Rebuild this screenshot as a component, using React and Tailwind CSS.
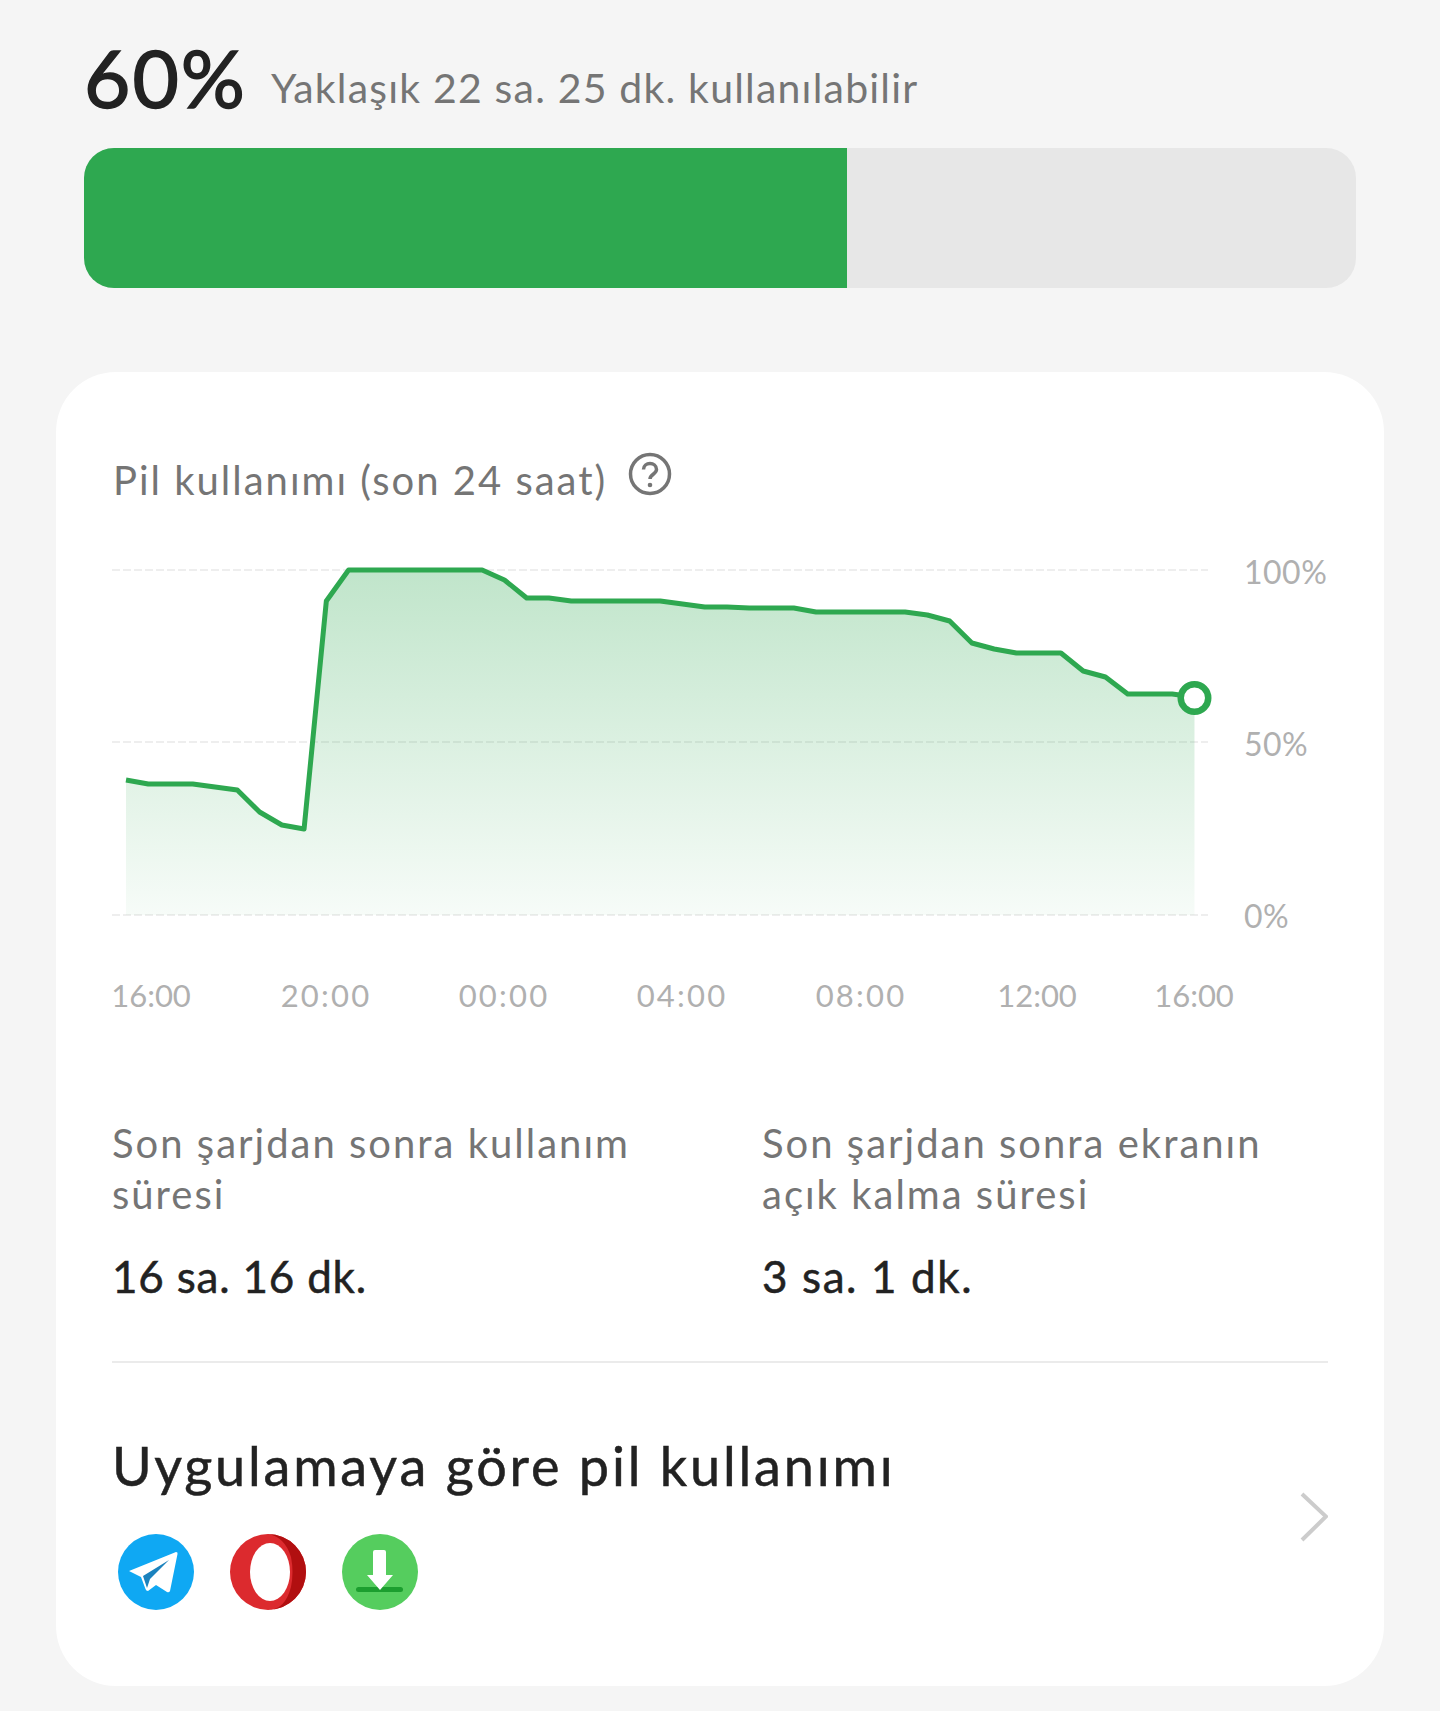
import React from "react";

// y pixel of each half hour sample, x runs 126..1194 across the chart
const samples = [
  780, 784, 784, 784, 787, 790, 812, 825, 829, 601, 570, 570, 570, 570, 570, 570, 570, 580, 598, 598, 601, 601, 601,
  601, 601, 604, 607, 607, 608, 608, 608, 612, 612, 612, 612, 612, 615, 621, 643, 649, 653, 653, 653, 671, 677, 694,
  694, 694, 697,
];

const CHART_LEFT = 112;
const CHART_TOP = 550;

const linePoints = samples.map((y, i) => [126 + i * 22.26 - CHART_LEFT, y - CHART_TOP]);
const linePath = linePoints.map((p) => p.join(",")).join(" ");
const areaPath = `${linePath} ${linePoints[48][0]},365 ${linePoints[0][0]},365`;

function Chart() {
  return (
    <svg width="1100" height="375" viewBox="0 0 1100 375" className="block shrink-0">
      <defs>
        <linearGradient id="area" x1="0" y1="0" x2="0" y2="1">
          <stop offset="0" stopColor="#2ea850" stopOpacity="0.3" />
          <stop offset="1" stopColor="#2ea850" stopOpacity="0.04" />
        </linearGradient>
      </defs>
      {[20, 192, 365].map((y) => (
        <line key={y} x1="0" x2="1096" y1={y} y2={y} stroke="#eeeeee" strokeWidth="2" strokeDasharray="8 3" />
      ))}
      <polygon points={areaPath} fill="url(#area)" />
      <polyline points={linePath} fill="none" stroke="#2ea850" strokeWidth="5" strokeLinejoin="round" />
      <circle cx={linePoints[48][0]} cy={148} r="13.75" fill="#ffffff" stroke="#2ea850" strokeWidth="6.500" />
    </svg>
  );
}

function TelegramIcon() {
  return (
    <svg width="76" height="76" viewBox="0 0 76 76">
      <circle cx="38" cy="38" r="38" fill="#0fa8f3" />
      <path d="M11 37 L58 18 Q60 18 59.500 20 L52 57 Q51 59 49 58 L38 51 L30 57 Q28 57 27.500 55 L23 43 Z" fill="#ffffff" />
      <path d="M25 42 L51 26 L32 45 L29 54 Z" fill="#1b82bd" />
    </svg>
  );
}

function OperaIcon() {
  return (
    <svg width="76" height="76" viewBox="0 0 76 76">
      <circle cx="38" cy="38" r="38" fill="#dc2a2e" />
      <path d="M38 0 A38 38 0 0 1 38 76 Q55 76 61 53 Q64 38 61 23 Q55 3 38 0 Z" fill="#b10f10" />
      <ellipse cx="40" cy="38" rx="20" ry="29" fill="#ffffff" />
    </svg>
  );
}

function DownloadIcon() {
  return (
    <svg width="76" height="76" viewBox="0 0 76 76">
      <circle cx="38" cy="38" r="38" fill="#55cd5e" />
      <rect x="14" y="53" width="47" height="5" rx="2.500" fill="#1c9e2f" />
      <path d="M31 18 Q31 16 33 16 H42 Q44 16 44 18 V41 H51 L38 56 L25 41 H31 Z" fill="#ffffff" />
    </svg>
  );
}

function Stat({ label, value, className, valueClassName }) {
  return (
    <div className={className}>
      <p className="max-w-[560px] text-[40px] leading-[51px] tracking-[2px] text-[#757575]">{label}</p>
      <p className={`mt-[30px] text-[44px] leading-[52px] text-[#222222] [-webkit-text-stroke:0.5px_#222222] ${valueClassName}`}>
        {value}
      </p>
    </div>
  );
}

export default function App() {
  return (
    <div className="w-[1440px] h-[1711px] overflow-hidden bg-[#f5f5f5] font-['Lato',sans-serif]">
      {/* Charge summary */}
      <div className="px-[84px] pt-[32px]">
        <div className="flex items-end h-[90px]">
          <span className="text-[80px] leading-[90px] tracking-[2px] text-[#222222] [-webkit-text-stroke:1.5px_#222222]">60%</span>
          <span className="ml-[24px] text-[41px] leading-[68px] tracking-[1.2px] text-[#757575]">
            Yaklaşık 22 sa. 25 dk. kullanılabilir
          </span>
        </div>
        <div className="mt-[26px] h-[140px] rounded-[30px] overflow-hidden bg-[#e7e7e7]">
          <div className="h-full w-[763px] bg-[#2ea850]" />
        </div>
      </div>

      {/* Usage card */}
      <div className="mt-[84px] mx-[56px] h-[1314px] rounded-[60px] bg-white px-[56px] pt-[78px]">
        <div className="flex items-center">
          <h2 className="ml-px text-[40px] leading-[60px] tracking-[2px] text-[#757575]">Pil kullanımı (son 24 saat)</h2>
          <svg width="44" height="44" viewBox="0 0 44 44" className="ml-[21px] -mt-[12px]">
            <circle cx="22" cy="22" r="19.500" fill="none" stroke="#757575" strokeWidth="3.500" />
            <path
              d="M15.500 17.500 C15.500 9.500 28.500 9.500 28.500 17.500 C28.500 22 22 22.500 22 27"
              fill="none"
              stroke="#757575"
              strokeWidth="3.500"
            />
            <circle cx="22" cy="33" r="2.300" fill="#757575" />
          </svg>
        </div>

        <div className="mt-[40px] flex">
          <Chart />
          <div className="ml-[32px] flex h-[384px] flex-col justify-between pt-[4px] text-[32px] leading-[36px] tracking-[0.5px] text-[#b0b0b0]">
            <span>100%</span>
            <span>50%</span>
            <span>0%</span>
          </div>
        </div>

        {/* Time axis */}
        <div className="mt-[41px] flex text-[31px] leading-[40px] text-[#b0b0b0]">
          <span className="flex w-0 ml-[39px] justify-center">16:00</span>
          <span className="flex w-0 ml-[175px] justify-center tracking-[2.2px]">20:00</span>
          <span className="flex w-0 ml-[178px] justify-center tracking-[2.2px]">00:00</span>
          <span className="flex w-0 ml-[178px] justify-center tracking-[2.2px]">04:00</span>
          <span className="flex w-0 ml-[179px] justify-center tracking-[2.2px]">08:00</span>
          <span className="flex w-0 ml-[176px] justify-center">12:00</span>
          <span className="flex w-0 ml-[157px] justify-center">16:00</span>
        </div>

        <div className="mt-[103px] flex">
          <Stat
            label="Son şarjdan sonra kullanım süresi"
            value="16 sa. 16 dk."
            className="w-[650px]"
            valueClassName="tracking-[0.8px]"
          />
          <Stat
            label="Son şarjdan sonra ekranın açık kalma süresi"
            value="3 sa. 1 dk."
            className="w-[530px]"
            valueClassName="tracking-[1.6px]"
          />
        </div>

        <div className="mt-[59px] h-[2px] bg-[#ebebeb]" />

        {/* Per app usage */}
        <div className="mt-[71px] flex items-center justify-between">
          <div>
            <h3 className="text-[54px] leading-[64px] tracking-[2.8px] text-[#222222] [-webkit-text-stroke:0.5px_#222222]">
              Uygulamaya göre pil kullanımı
            </h3>
            <div className="mt-[36px] ml-[6px] flex gap-[36px]">
              <TelegramIcon />
              <OperaIcon />
              <DownloadIcon />
            </div>
          </div>
          <svg width="30" height="52" viewBox="0 0 30 52" className="-mt-[10px]">
            <path d="M4 3 L28 25.500 L4 49" fill="none" stroke="#cccccc" strokeWidth="4" />
          </svg>
        </div>
      </div>
    </div>
  );
}
